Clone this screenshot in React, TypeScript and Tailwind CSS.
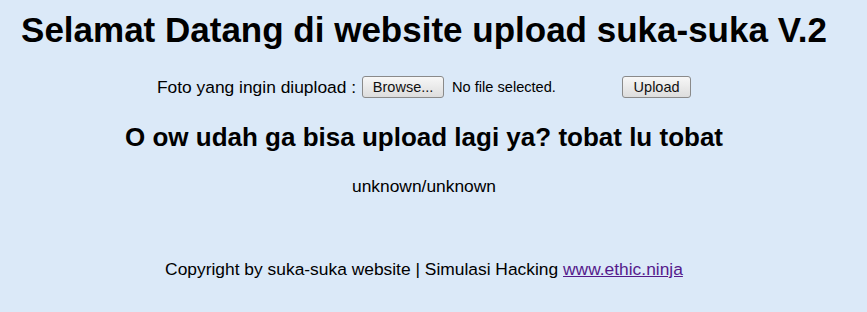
export default function App() {
  return (
    <div
      className="w-[867px] h-[312px] bg-[#dbe9f8] text-black overflow-hidden"
      style={{ fontFamily: '"Liberation Sans", Arial, sans-serif' }}
    >
      <div className="w-[848px] flex flex-col items-center">
        <h1 className="mt-[10px] text-[35px] font-bold leading-[40px] whitespace-nowrap">
          Selamat Datang di website upload suka-suka V.2
        </h1>
        <div className="mt-[26px] flex items-center h-[22px] text-[17.4px] leading-[20px] whitespace-nowrap">
          <span>Foto yang ingin diupload :</span>
          <button className="ml-[6px] h-[22px] w-[82px] text-[14.5px] text-[#111] border border-[#8a8a8a] rounded-[3px] bg-gradient-to-b from-[#f7f7f7] to-[#dddddd] leading-none">
            Browse...
          </button>
          <span className="ml-[8px] text-[14.6px] w-[166px]">No file selected.</span>
          <button className="ml-[4px] h-[22px] w-[69px] text-[14.5px] text-[#111] border border-[#8a8a8a] rounded-[3px] bg-gradient-to-b from-[#f7f7f7] to-[#dddddd] leading-none">
            Upload
          </button>
        </div>
        <h2 className="mt-[24px] text-[26px] font-bold leading-[30px] whitespace-nowrap">
          O ow udah ga bisa upload lagi ya? tobat lu tobat
        </h2>
        <p className="mt-[24px] text-[17.4px] leading-[20px]">unknown/unknown</p>
        <p className="mt-[63px] text-[17.4px] leading-[20px] whitespace-nowrap">
          Copyright by suka-suka website | Simulasi Hacking{" "}
          <a href="#" className="text-[#551a8b] underline">
            www.ethic.ninja
          </a>
        </p>
      </div>
    </div>
  );
}
